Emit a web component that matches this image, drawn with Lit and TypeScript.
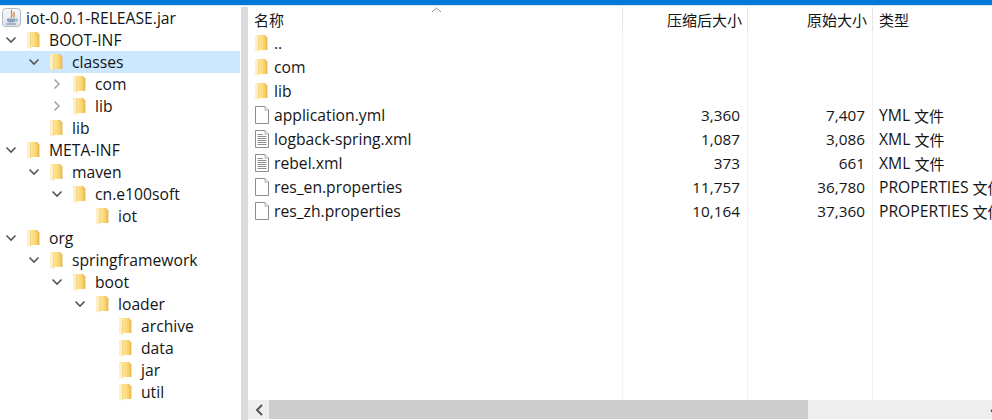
import { LitElement, html, css, svg } from "lit";
import { customElement } from "lit/decorators.js";

type TreeRow = { name: string; depth: number; caret?: "open" | "closed"; selected?: boolean };

const TREE: TreeRow[] = [
  { name: "BOOT-INF", depth: 0, caret: "open" },
  { name: "classes", depth: 1, caret: "open", selected: true },
  { name: "com", depth: 2, caret: "closed" },
  { name: "lib", depth: 2, caret: "closed" },
  { name: "lib", depth: 1 },
  { name: "META-INF", depth: 0, caret: "open" },
  { name: "maven", depth: 1, caret: "open" },
  { name: "cn.e100soft", depth: 2, caret: "open" },
  { name: "iot", depth: 3 },
  { name: "org", depth: 0, caret: "open" },
  { name: "springframework", depth: 1, caret: "open" },
  { name: "boot", depth: 2, caret: "open" },
  { name: "loader", depth: 3, caret: "open" },
  { name: "archive", depth: 4 },
  { name: "data", depth: 4 },
  { name: "jar", depth: 4 },
  { name: "util", depth: 4 },
];

type FileRow = { name: string; icon: "folder" | "blank" | "text"; packed?: string; size?: string; kind?: string };

const FILES: FileRow[] = [
  { name: "..", icon: "folder" },
  { name: "com", icon: "folder" },
  { name: "lib", icon: "folder" },
  { name: "application.yml", icon: "blank", packed: "3,360", size: "7,407", kind: "YML" },
  { name: "logback-spring.xml", icon: "text", packed: "1,087", size: "3,086", kind: "XML" },
  { name: "rebel.xml", icon: "text", packed: "373", size: "661", kind: "XML" },
  { name: "res_en.properties", icon: "blank", packed: "11,757", size: "36,780", kind: "PROPERTIES" },
  { name: "res_zh.properties", icon: "blank", packed: "10,164", size: "37,360", kind: "PROPERTIES" },
];

const folder = () => html`<svg class="ico" width="16" height="18" viewBox="0 0 16 18">
  <defs>
    <linearGradient id="fg" x1="0" x2="1" y1="0" y2="0">
      <stop offset="0" stop-color="#fde9a4" />
      <stop offset="0.6" stop-color="#fddc7f" />
      <stop offset="1" stop-color="#f0c055" />
    </linearGradient>
  </defs>
  <path d="M1 1 H11 V3 H13 V16 H4.5 V17.5 L1 16.5 Z" fill="url(#fg)" />
  <path d="M1 1 L4.5 2.5 V17.5 L1 16.5 Z" fill="#fef0c4" />
  <path d="M4.5 3 V17.5" stroke="#eccb77" stroke-width="0.6" fill="none" />
  <path d="M11 1 V3 H13 V16" stroke="#dfb254" stroke-width="0.8" fill="none" />
</svg>`;

const doc = (lines: boolean) => html`<svg class="ico" width="16" height="18" viewBox="0 0 16 18">
  <path d="M1.5 0.5 H11 L14.5 4 V17.5 H1.5 Z" fill="#fff" stroke="#8d8d8d" />
  <path d="M11 0.5 V4 H14.5" fill="#f2f2f2" stroke="#a8a8a8" />
  ${lines
    ? svg`<path d="M3.5 4.5 H9 M3.5 6.5 H12.5 M3.5 8.5 H12.5 M3.5 10.5 H12.5 M3.5 12.5 H12.5 M3.5 14.5 H12.5" stroke="#8f8f8f" fill="none" />`
    : svg``}
</svg>`;

const caret = (kind?: "open" | "closed") => {
  if (kind === "open")
    return html`<svg class="caret" width="12" height="12" viewBox="0 0 12 12"><path d="M1.5 3.5 L6 8 L10.5 3.5" fill="none" stroke="#555" stroke-width="1.6" /></svg>`;
  if (kind === "closed")
    return html`<svg class="caret" width="12" height="12" viewBox="0 0 12 12"><path d="M3.5 1.5 L8 6 L3.5 10.5" fill="none" stroke="#a6a6a6" stroke-width="1.6" /></svg>`;
  return html`<span class="caret"></span>`;
};

const jar = html`<svg width="20" height="20" viewBox="0 0 20 20">
  <defs>
    <linearGradient id="jg" x1="0" x2="0" y1="0" y2="1">
      <stop offset="0" stop-color="#f7f8fa" />
      <stop offset="1" stop-color="#dfe3e8" />
    </linearGradient>
  </defs>
  <rect x="0.5" y="0.5" width="18" height="18" rx="3" fill="url(#jg)" stroke="#b4bac2" />
  <path d="M10 2 C7.5 5 12 6 9 9.5 M12.5 4 C10.5 6 13.5 7 11.5 9.5" fill="none" stroke="#e0762f" stroke-width="1.2" />
  <path d="M5 10.5 H13 V12.5 C13 14 11.5 14.5 9 14.5 C6.5 14.5 5 14 5 12.5 Z" fill="#8aa3bd" />
  <path d="M13 11 H15 V13 H13" fill="none" stroke="#8aa3bd" />
  <path d="M4 16 H14" stroke="#7b97b4" stroke-width="1.2" />
</svg>`;

@customElement("app-root")
export class AppRoot extends LitElement {
  static styles = css`
    :host {
      display: block;
      width: 992px;
      height: 420px;
      overflow: hidden;
      background: #fff;
      font-family: "Open Sans", "Noto Sans CJK SC", sans-serif;
      font-size: 15.7px;
      color: #151515;
    }
    .bar {
      height: 5px;
      background: #0078d7;
    }
    .edge {
      height: 1px;
      background: #d9e6f2;
      margin-bottom: 1px;
    }
    .main {
      display: grid;
      grid-template-columns: 241px 7px 1fr;
      height: 413px;
    }
    .tree {
      width: 240px;
    }
    .row {
      height: 22px;
      display: flex;
      align-items: center;
      white-space: nowrap;
    }
    .row.sel {
      background: #cce8ff;
    }
    .root {
      padding-left: 2px;
      gap: 4px;
    }
    .indent {
      flex: none;
    }
    .caret {
      width: 12px;
      height: 12px;
      flex: none;
      margin: 0 4px 0 5px;
    }
    .ico {
      flex: none;
    }
    .tree .ico {
      margin: 0 7px 0 5px;
    }
    .split {
      background: #dcdcdc;
    }
    .pane {
      min-width: 0;
      overflow: hidden;
      display: flex;
      flex-direction: column;
      position: relative;
    }
    .grid {
      flex: 1;
      min-height: 0;
      overflow: hidden;
      display: grid;
      grid-template-columns: 375px 125px 125px 1fr;
      grid-template-rows: 24px;
      grid-auto-rows: 24px;
      position: relative;
    }
    .cell {
      display: flex;
      align-items: center;
      white-space: nowrap;
      overflow: hidden;
      border-right: 1px solid #edf2fb;
    }
    .cell:nth-child(4n) {
      border-right: 0;
    }
    .filler {
      border-right: 1px solid #edf2fb;
    }
    .filler:nth-child(4n) {
      border-right: 0;
    }
    .head {
      border-right-color: #e5e5e5;
      font-size: 15px;
    }
    .name {
      padding-left: 6px;
      gap: 4px;
    }
    .num {
      justify-content: flex-end;
      padding-right: 7px;
      font-size: 15.3px;
    }
    .num.head {
      padding-right: 5px;
      font-size: 15px;
    }
    .type {
      padding-left: 6px;
      gap: 4px;
    }
    .cjk {
      font-size: 15px;
    }
    .sort {
      position: absolute;
      left: 183px;
      top: 0;
    }
    .sb {
      height: 19px;
      margin-bottom: 1px;
      background: #eee;
      display: flex;
      align-items: center;
      flex: none;
    }
    .sb-btn {
      width: 21px;
      flex: none;
      display: flex;
      justify-content: center;
    }
    .thumb {
      width: 539px;
      height: 19px;
      background: #cdcdcd;
      flex: none;
    }
    .sb-right {
      margin-left: auto;
      width: 2px;
      height: 12px;
      flex: none;
      overflow: hidden;
    }
  `;

  private fileCells(f: FileRow) {
    return html`
      <div class="cell name">
        ${f.icon === "folder" ? folder() : doc(f.icon === "text")}
        <span>${f.name}</span>
      </div>
      <div class="cell num">${f.packed ?? ""}</div>
      <div class="cell num">${f.size ?? ""}</div>
      <div class="cell type">${f.kind ? html`<span>${f.kind}</span><span class="cjk">文件</span>` : ""}</div>
    `;
  }

  render() {
    const fillerCells = Array.from({ length: 8 * 4 });
    return html`
      <div class="bar"></div>
      <div class="edge"></div>
      <div class="main">
        <div class="tree">
          <div class="row root">${jar}<span>iot-0.0.1-RELEASE.jar</span></div>
          ${TREE.map(
            (r) => html`<div class="row ${r.selected ? "sel" : ""}">
              <span class="indent" style="width:${r.depth * 23}px"></span>
              ${caret(r.caret)}${folder()}<span>${r.name}</span>
            </div>`
          )}
        </div>
        <div class="split"></div>
        <div class="pane">
          <div class="grid">
            <div class="cell name head">名称</div>
            <div class="cell num head">压缩后大小</div>
            <div class="cell num head">原始大小</div>
            <div class="cell type head">类型</div>
            ${FILES.map((f) => this.fileCells(f))}
            ${fillerCells.map(() => html`<div class="filler"></div>`)}
            <svg class="sort" width="11" height="6" viewBox="0 0 11 6"><path d="M1 5 L5.5 1 L10 5" fill="none" stroke="#8a8a8a" /></svg>
          </div>
          <div class="sb">
            <div class="sb-btn"><svg width="8" height="12" viewBox="0 0 8 12"><path d="M7 1 L2 6 L7 11" fill="none" stroke="#555" stroke-width="2" /></svg></div>
            <div class="thumb"></div>
            <div class="sb-right"><svg width="8" height="12" viewBox="0 0 8 12"><path d="M1 1 L6 6 L1 11" fill="none" stroke="#555" stroke-width="2" /></svg></div>
          </div>
        </div>
      </div>
    `;
  }
}
